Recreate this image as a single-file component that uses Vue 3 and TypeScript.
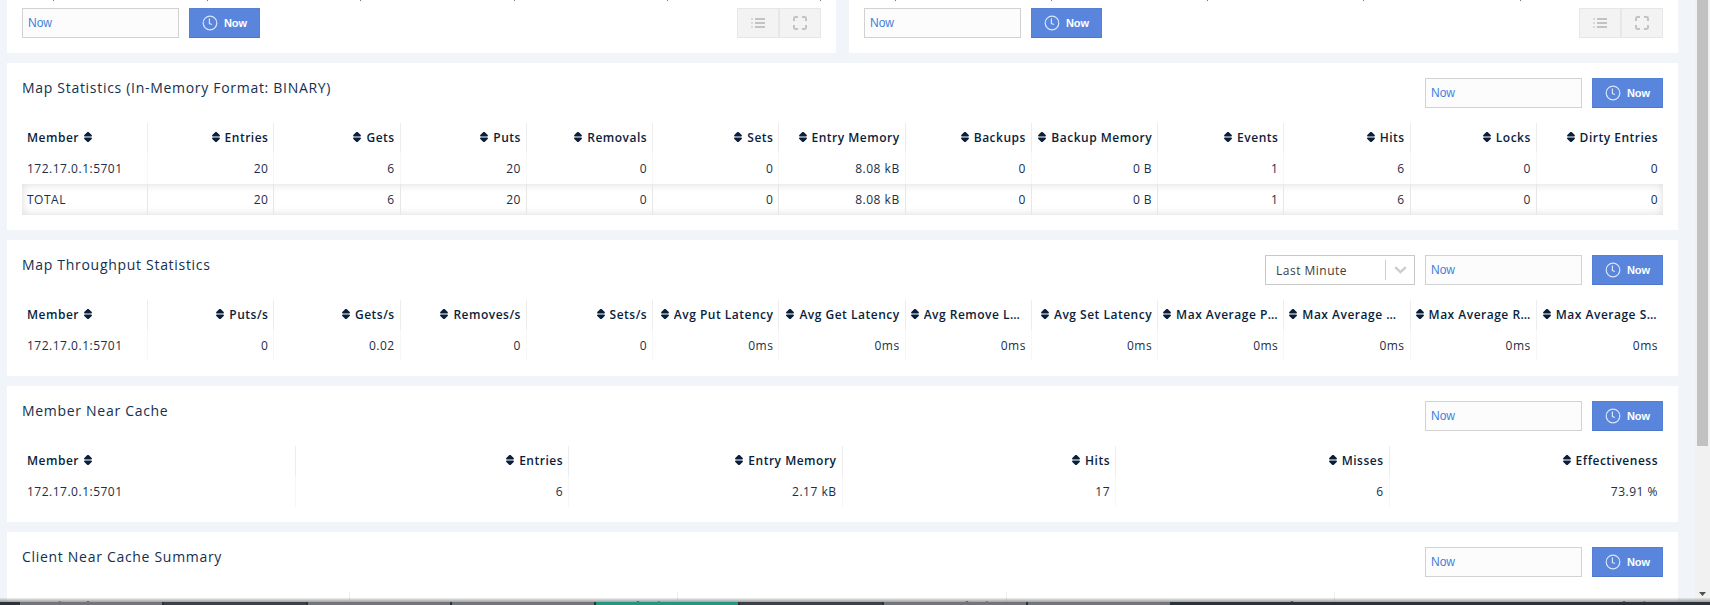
<script setup lang="ts">
interface Panel {
  title: string
  columns: string[]
  rows: string[][]
  total?: string[]
  select?: string
}

const ip = '172.17.0.1:5701'
const panels: Panel[] = [
  {
    title: 'Map Statistics (In-Memory Format: BINARY)',
    columns: ['Member', 'Entries', 'Gets', 'Puts', 'Removals', 'Sets', 'Entry Memory', 'Backups', 'Backup Memory', 'Events', 'Hits', 'Locks', 'Dirty Entries'],
    rows: [[ip, '20', '6', '20', '0', '0', '8.08 kB', '0', '0 B', '1', '6', '0', '0']],
    total: ['TOTAL', '20', '6', '20', '0', '0', '8.08 kB', '0', '0 B', '1', '6', '0', '0'],
  },
  {
    title: 'Map Throughput Statistics',
    select: 'Last Minute',
    columns: ['Member', 'Puts/s', 'Gets/s', 'Removes/s', 'Sets/s', 'Avg Put Latency', 'Avg Get Latency', 'Avg Remove Latency', 'Avg Set Latency', 'Max Average Put Latency', 'Max Average Get Latency', 'Max Average Remove Latency', 'Max Average Set Latency'],
    rows: [[ip, '0', '0.02', '0', '0', '0ms', '0ms', '0ms', '0ms', '0ms', '0ms', '0ms', '0ms']],
  },
  {
    title: 'Member Near Cache',
    columns: ['Member', 'Entries', 'Entry Memory', 'Hits', 'Misses', 'Effectiveness'],
    rows: [[ip, '6', '2.17 kB', '17', '6', '73.91 %']],
  },
  {
    title: 'Client Near Cache Summary',
    columns: ['Member', 'Hits', 'Hits', 'Gets', 'Hits'],
    rows: [],
  },
]

// Axis tick marks at the bottom edge of each chart, relative to its panel
const ticks: number[][] = [
  [46, 200, 353, 507, 660, 813],
  [46, 202, 358, 514, 671],
]
const tasks: string[] = ['dark', 'grey', 'slate', 'grey', 'grey', 'teal', 'slate', 'grey', 'grey', 'end']
</script>

<template>
  <div class="screen">
    <main class="page">
      <div class="charts">
        <section v-for="(t, i) in ticks" :key="i" class="panel chart">
          <i v-for="x in t" :key="x" class="tick" :style="{ left: x + 'px' }"></i>
          <div class="controls">
            <input class="time" value="Now" />
            <button class="now">
              <svg width="16" height="16" viewBox="0 0 16 16"><circle cx="8" cy="8" r="6.8" /><path d="M7.4 3.6v4.9l2.6 1" /></svg>
              <span>Now</span>
            </button>
          </div>
          <div class="tools">
            <button>
              <svg width="14" height="12" viewBox="0 0 14 12"><path class="dots" d="M0 2h2M0 6h2M0 10h2" /><path d="M4 2h10M4 6h10M4 10h10" /></svg>
            </button>
            <button>
              <svg width="14" height="14" viewBox="0 0 14 14"><path d="M1 5V2.4Q1 1 2.4 1H5M9 1h2.6Q13 1 13 2.4V5M13 9v2.6Q13 13 11.6 13H9M5 13H2.4Q1 13 1 11.6V9" /></svg>
            </button>
          </div>
        </section>
      </div>

      <section v-for="p in panels" :key="p.title" class="panel">
        <header class="head">
          <h2>{{ p.title }}</h2>
          <div class="controls">
            <div v-if="p.select" class="select">
              <span>{{ p.select }}</span>
              <svg width="13" height="8" viewBox="0 0 13 8"><path d="M1.2 1.2l5.3 5 5.3-5" /></svg>
            </div>
            <input class="time" value="Now" />
            <button class="now">
              <svg width="16" height="16" viewBox="0 0 16 16"><circle cx="8" cy="8" r="6.8" /><path d="M7.4 3.6v4.9l2.6 1" /></svg>
              <span>Now</span>
            </button>
          </div>
        </header>
        <div class="table">
          <div class="row th">
            <div v-for="(c, i) in p.columns" :key="i" class="cell">
              <svg class="sort" width="8" height="10" viewBox="0 0 8 10"><path d="M3.4 0H4.6L7.7 3Q8.3 4.5 7.2 4.5H0.8Q-0.3 4.5 0.3 3ZM3.4 10H4.6L7.7 7Q8.3 5.5 7.2 5.5H0.8Q-0.3 5.5 0.3 7Z" /></svg>
              <span>{{ c }}</span>
            </div>
          </div>
          <div v-for="(r, ri) in p.rows" :key="ri" class="row">
            <div v-for="(c, i) in r" :key="i" class="cell"><span>{{ c }}</span></div>
          </div>
          <div v-if="p.total" class="row total">
            <div v-for="(c, i) in p.total" :key="i" class="cell"><span>{{ c }}</span></div>
          </div>
        </div>
      </section>
    </main>

    <div class="scroll">
      <div class="thumb"></div>
      <svg width="7" height="4" viewBox="0 0 7 4"><path d="M0 0H7L3.5 4Z" /></svg>
    </div>
    <div class="taskbar">
      <div class="shade"></div>
      <div class="tasks"><i v-for="(t, i) in tasks" :key="i" :class="t"></i></div>
    </div>
  </div>
</template>

<style>
html,
body {
  overflow: hidden;
}
</style>

<style scoped>
.screen {
  position: relative;
  display: flex;
  width: 1710px;
  height: 605px;
  overflow: hidden;
  background: #f1f5fa;
  font-family: 'Open Sans', 'Noto Sans', sans-serif;
  font-size: 12px;
  color: #1b2e48;
}
.screen * {
  box-sizing: border-box;
}
.page {
  display: flex;
  flex-direction: column;
  gap: 10px;
  width: 1671px;
  margin-left: 7px;
}
.charts {
  display: flex;
  gap: 13px;
  height: 53px;
  flex: none;
}
.panel {
  flex: none;
  background: #fff;
  padding: 15px;
}
.chart {
  position: relative;
  width: 829px;
  padding-top: 8px;
  display: flex;
  justify-content: space-between;
}
.tick {
  position: absolute;
  top: 0;
  width: 1px;
  height: 1px;
  background: #777;
}
.head {
  display: flex;
  justify-content: space-between;
  height: 45px;
}
h2 {
  margin: -1px 0 0;
  font-size: 14px;
  line-height: 22px;
  font-weight: 400;
  letter-spacing: 0.7px;
  color: #13304f;
}
.controls {
  display: flex;
  gap: 10px;
}
.time {
  width: 157px;
  height: 30px;
  padding: 0 5px;
  border: 1px solid #d2d2d2;
  background: #fcfcfc;
  color: #3f7fdc;
  font: 12px 'Liberation Sans', Arial, sans-serif;
  border-radius: 0;
}
.now {
  display: flex;
  align-items: center;
  justify-content: center;
  gap: 6px;
  width: 71px;
  height: 30px;
  padding: 0;
  border: 1px solid #5580d4;
  border-bottom-color: #5078c6;
  background: #5985dd;
  color: #fff;
  font: bold 11px 'Liberation Sans', Arial, sans-serif;
}
.now svg {
  fill: none;
  stroke: #dbe5f8;
  stroke-width: 1.2;
}
.tools {
  display: flex;
}
.tools button {
  display: flex;
  align-items: center;
  justify-content: center;
  width: 42px;
  height: 30px;
  padding: 0;
  border: 1px solid #e7e7e7;
  background: #f3f3f3;
}
.tools svg {
  fill: none;
  stroke: #c3c3c3;
  stroke-width: 2;
}
.tools .dots {
  stroke: #d9d9d9;
}
.select {
  display: flex;
  align-items: center;
  width: 150px;
  height: 30px;
  padding-left: 10px;
  border: 1px solid #c8c8c8;
  color: #3d3d3d;
  letter-spacing: 0.5px;
}
.select span {
  flex: 1;
}
.select svg {
  box-sizing: content-box;
  padding: 6px 7px 6px 8px;
  border-left: 1px solid #ccc;
  fill: none;
  stroke: #ccc;
  stroke-width: 2.3;
}
.row {
  display: flex;
  height: 31px;
}
.th {
  height: 30px;
  font-weight: 600;
  color: #0a1e3c;
}
.cell {
  display: flex;
  align-items: center;
  justify-content: flex-end;
  flex: 1 1 0;
  min-width: 0;
  gap: 5px;
  padding: 0 5px;
  border-right: 1px solid #f7f7f7;
  letter-spacing: 0.5px;
}
.th .cell {
  padding-bottom: 2px;
  border-color: #ededed;
}
.row .cell:last-child {
  padding-right: 4px;
  padding-left: 6px;
  border-color: transparent;
}
.cell:first-child {
  justify-content: flex-start;
}
.th .cell:first-child {
  flex-direction: row-reverse;
  justify-content: flex-end;
}
.cell span {
  overflow: hidden;
  text-overflow: ellipsis;
  white-space: nowrap;
}
.sort {
  flex: none;
  fill: #0a1e3c;
}
.total {
  box-shadow: inset 0 0 10px rgba(0, 0, 0, 0.15);
}
.total .cell {
  border-color: #e7e7e7;
}
.scroll {
  position: absolute;
  top: 0;
  right: 0;
  width: 15px;
  height: 605px;
  background: #f1f1f1;
}
.thumb {
  width: 11px;
  height: 446px;
  margin-left: 2px;
  background: #c1c1c1;
}
.scroll svg {
  display: block;
  margin: 146px 0 0 4px;
  fill: #505050;
}
.taskbar {
  position: absolute;
  left: 0;
  bottom: 0;
  width: 1710px;
}
.shade {
  height: 4px;
  background: linear-gradient(rgba(130, 130, 125, 0.12), rgba(130, 130, 125, 0.75));
}
.tasks {
  display: flex;
  height: 3px;
  background: #2b323c;
}
.tasks i {
  flex: none;
  width: 142px;
  margin-right: 2px;
}
.tasks .dark {
  width: 20px;
  margin: 0;
}
.tasks .grey {
  background: #73747c;
}
.tasks .slate {
  background: #3d404b;
}
.tasks .teal {
  background: #209781;
}
.tasks .end {
  background: transparent;
}
</style>
